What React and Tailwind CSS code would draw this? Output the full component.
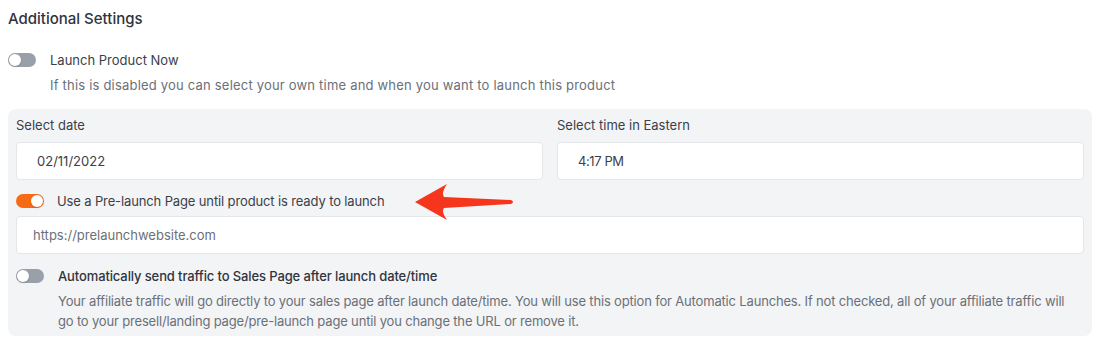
import React from 'react';

const font = { fontFamily: 'Inter, "Noto Sans", sans-serif' };

const Toggle = ({ on }) => (
  <span
    className={`relative inline-flex h-[14px] w-[28px] shrink-0 items-center rounded-full ${
      on ? 'bg-[#f76b15]' : 'bg-[#9aa0aa]'
    }`}
  >
    <span
      className={`absolute top-[1px] h-[12px] w-[12px] rounded-full bg-white shadow-sm ${
        on ? 'left-[15px]' : 'left-[1px]'
      }`}
    />
  </span>
);

const Arrow = () => (
  <svg className="absolute left-[413px] top-[182px]" width="104" height="40" viewBox="0 0 104 40">
    <path
      d="M2 20 L34 2 Q28 11 31 15 L98 18 Q102 20 98 22 L31 26 Q28 30 34 38 Z"
      fill="#f5361c"
    />
  </svg>
);

export default function App() {
  return (
    <div className="relative w-[1103px] h-[349px] overflow-hidden bg-white text-[13px] leading-5 text-[#3b3f48]" style={font}>
      <div className="px-2 pt-[9px]">
        <h2 className="text-[15px] font-medium leading-5 text-[#2f3440]">Additional Settings</h2>

        <div className="mt-[21px] flex items-center gap-[14px]">
          <Toggle />
          <span className="text-[#3b3f48]">Launch Product Now</span>
        </div>
        <p className="mt-[5px] pl-[42px] tracking-[0.2px] text-[#6b7078]">
          If this is disabled you can select your own time and when you want to launch this product
        </p>

        <div className="mt-[14px] w-[1084px] rounded-lg bg-[#f3f4f6] px-2 pt-[6px] pb-[5px]">
          <div className="flex gap-[14px]">
            <div className="flex-1">
              <label className="block text-[#3b3f48]">Select date</label>
              <div className="mt-[7px] flex h-[38px] items-center rounded border border-[#e4e6ea] bg-white px-5 text-[#3b3f48]">
                02/11/2022
              </div>
            </div>
            <div className="flex-1">
              <label className="block text-[#3b3f48]">Select time in Eastern</label>
              <div className="mt-[7px] flex h-[38px] items-center rounded border border-[#e4e6ea] bg-white px-5 tracking-[-0.4px] text-[#3b3f48]">
                4:17 PM
              </div>
            </div>
          </div>

          <div className="mt-[11px] flex items-center gap-[13px]">
            <Toggle on />
            <span className="tracking-[-0.13px] text-[#3b3f48]">Use a Pre-launch Page until product is ready to launch</span>
          </div>
          <div className="mt-[5px] flex h-[38px] items-center rounded border border-[#e4e6ea] bg-white px-4 text-[#6b7078]">
            https://prelaunchwebsite.com
          </div>

          <div className="mt-[12px] flex items-center gap-[14px]">
            <Toggle />
            <span className="font-medium tracking-[-0.12px] text-[#2f3440]">Automatically send traffic to Sales Page after launch date/time</span>
          </div>
          <p className="mt-[5px] pl-[42px] pr-3 tracking-[-0.17px] text-[#6b7078]">
            Your affiliate traffic will go directly to your sales page after launch date/time. You will use this option for Automatic Launches. If not checked, all of your affiliate traffic will go to your presell/landing page/pre-launch page until you change the URL or remove it.
          </p>
        </div>
      </div>
      <Arrow />
    </div>
  );
}
